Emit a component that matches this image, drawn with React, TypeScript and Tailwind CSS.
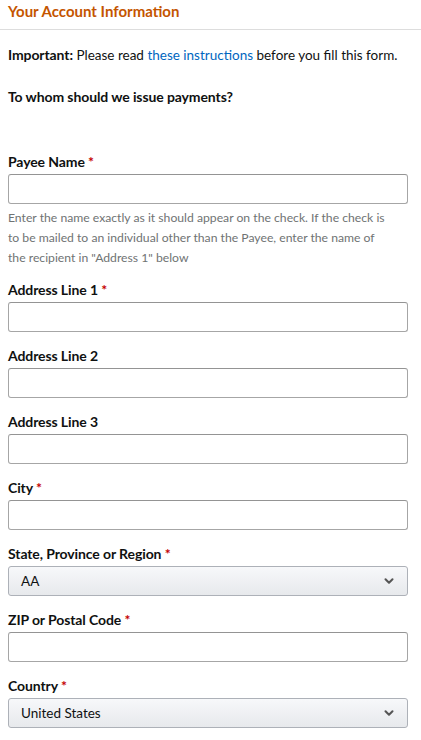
import { ChevronDown } from 'lucide-react';

const Req = () => <span className="text-[#c40000]"> *</span>;

const Label = ({ text, required }: { text: string; required?: boolean }) => (
  <label className="block h-[18px] leading-[18px] mb-[3px] text-[14px] tracking-[-0.1px] font-bold text-[#0f1111]">
    {text}
    {required && <Req />}
  </label>
);

const TextInput = () => (
  <input
    type="text"
    className="block w-full h-[30px] rounded-[3px] border border-[#a6a6a6] border-t-[#949494] bg-white px-2 text-[14px]"
  />
);

const Select = ({ value }: { value: string }) => (
  <div className="flex items-center justify-between h-[30px] rounded-[3px] border border-[#adb1b8] bg-linear-to-b from-[#f7f8fa] to-[#e7e9ec] pl-3 pr-[11px] text-[13.5px] text-[#0f1111]">
    <span>{value}</span>
    <ChevronDown className="w-3.5 h-3.5 text-[#555]" strokeWidth={3.5} />
  </div>
);

const Field = ({ label, required, children }: { label: string; required?: boolean; children: React.ReactNode }) => (
  <div className="mb-[15px]">
    <Label text={label} required={required} />
    {children}
  </div>
);

export default function App() {
  return (
    <div className="w-[421px] min-h-[740px] bg-white font-['Lato','Open_Sans',sans-serif] text-[#0f1111] text-[14px]">
      <div className="h-[30px] border-b border-[#dddddd] pl-2 pt-[2px]">
        <h1 className="text-[15px] leading-[18px] font-bold text-[#c45500]">Your Account Information</h1>
      </div>
      <div className="pl-2 pr-[13px]">
        <p className="mt-[16px] leading-[18px] text-[13.5px] whitespace-nowrap">
          <span className="font-bold text-[14px] tracking-[-0.1px]">Important:</span> Please read{' '}
          <a href="#" className="text-[#0066c0]">these instructions</a> before you fill this form.
        </p>
        <p className="mt-[24px] leading-[18px] font-bold tracking-[-0.1px]">To whom should we issue payments?</p>

        <div className="mt-[47px]">
          <Label text="Payee Name" required />
          <TextInput />
          <p className="mt-1 mb-[13px] pr-[14px] text-[12.2px] leading-[20px] text-[#6f7373]">
            Enter the name exactly as it should appear on the check. If the check is to be mailed to an individual other than the Payee, enter the name of the recipient in "Address 1" below
          </p>
        </div>

        <Field label="Address Line 1" required>
          <TextInput />
        </Field>
        <Field label="Address Line 2">
          <TextInput />
        </Field>
        <Field label="Address Line 3">
          <TextInput />
        </Field>
        <Field label="City" required>
          <TextInput />
        </Field>
        <Field label="State, Province or Region" required>
          <Select value="AA" />
        </Field>
        <Field label="ZIP or Postal Code" required>
          <TextInput />
        </Field>
        <Field label="Country" required>
          <Select value="United States" />
        </Field>
      </div>
    </div>
  );
}
